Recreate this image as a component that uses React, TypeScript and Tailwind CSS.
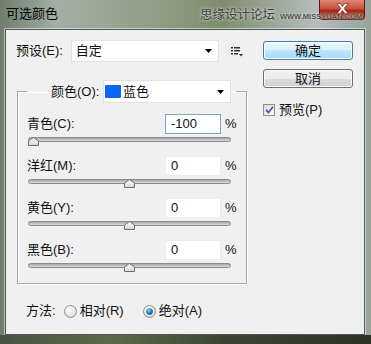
import React from 'react'

const rows = [
  { label: '青色(C):', value: -100, focused: true },
  { label: '洋红(M):', value: 0, focused: false },
  { label: '黄色(Y):', value: 0, focused: false },
  { label: '黑色(B):', value: 0, focused: false },
]

function Arrow() {
  return (
    <svg width="7" height="4" viewBox="0 0 7 4">
      <path d="M0 0H7L3.5 4Z" fill="#000" />
    </svg>
  )
}

function MenuIcon() {
  return (
    <svg width="12" height="10" viewBox="0 0 12 10">
      <rect x="0" y="0" width="2" height="1.5" fill="#333" />
      <rect x="3" y="0" width="6" height="1.5" fill="#333" />
      <rect x="0" y="3" width="2" height="1.5" fill="#333" />
      <rect x="3" y="3" width="6" height="1.5" fill="#333" />
      <rect x="0" y="6" width="2" height="1.5" fill="#333" />
      <rect x="3" y="6" width="4" height="1.5" fill="#333" />
      <path d="M8 7H12L10 9.5Z" fill="#333" />
    </svg>
  )
}

function CloseIcon() {
  return (
    <svg width="13" height="11" viewBox="0 0 13 11">
      <path
        d="M1 0.5H4.2L6.5 3.6L8.8 0.5H12L8.1 5.5L12 10.5H8.8L6.5 7.4L4.2 10.5H1L4.9 5.5Z"
        fill="#fff"
        stroke="#5a1a14"
        strokeWidth="0.6"
      />
    </svg>
  )
}

function Slider({ value }: { value: number }) {
  const left = 5 + ((value + 100) / 200) * 193 - 5.5
  return (
    <div className="relative mt-[3px] ml-[1px] w-[203px] h-[8px]">
      <div className="mt-[2px] h-[5px] rounded-full border border-[#8c8c8c] bg-[linear-gradient(#a4a4a4,#dcdcdc)]" />
      <svg
        className="absolute top-0"
        style={{ left }}
        width="11"
        height="9"
        viewBox="0 0 11 9"
      >
        <defs>
          <linearGradient id="thumb" x1="0" y1="0" x2="0" y2="1">
            <stop offset="0" stopColor="#ffffff" />
            <stop offset="1" stopColor="#d4d4d4" />
          </linearGradient>
        </defs>
        <path d="M0.5 8.5V4L5.5 0.5L10.5 4V8.5Z" fill="url(#thumb)" stroke="#6e6e6e" />
      </svg>
    </div>
  )
}

function Radio({ checked }: { checked: boolean }) {
  return (
    <svg width="13" height="13" viewBox="0 0 13 13">
      <defs>
        <radialGradient id="rOff" cx="0.4" cy="0.35" r="0.7">
          <stop offset="0" stopColor="#ffffff" />
          <stop offset="1" stopColor="#d6d6d6" />
        </radialGradient>
        <radialGradient id="rOn" cx="0.4" cy="0.35" r="0.7">
          <stop offset="0" stopColor="#8fd3f7" />
          <stop offset="0.6" stopColor="#1f7fb8" />
          <stop offset="1" stopColor="#0d4a78" />
        </radialGradient>
      </defs>
      <circle cx="6.5" cy="6.5" r="6" fill="url(#rOff)" stroke="#8f8f8f" />
      {checked && <circle cx="6.5" cy="6.5" r="3.3" fill="url(#rOn)" />}
    </svg>
  )
}

export default function App() {
  return (
    <div className="w-[371px] h-[344px] overflow-hidden flex flex-col font-['Liberation_Sans','Noto_Sans_CJK_SC',sans-serif] text-[13px] text-[#111] bg-[linear-gradient(to_right,#6f7d6c,#a4aea6_15%,#8e9b80_45%,#7f8d6e_60%,#b5bcbb_85%,#9aa39a)]">
      <div className="relative h-[29px] shrink-0 flex items-start">
        <div className="absolute left-[319px] top-0 w-[46px] h-[20px] rounded-b-[4px] border border-t-0 border-[#5a1a14] bg-[linear-gradient(#e08a78,#c9503c_45%,#a52a18_55%,#c4533a)] flex justify-center pt-[3px]">
          <CloseIcon />
        </div>
        <span className="ml-[6px] mt-[6px] leading-[16px] text-black">可选颜色</span>
        <span className="relative z-10 ml-auto mt-[7px] text-[12.5px] leading-[16px] text-[#3e3e3e] [text-shadow:0_0_3px_#fff]">
          思缘设计论坛
        </span>
        <span className="relative z-10 ml-[5px] mr-[9px] mt-[12px] text-[7.5px] leading-[10px] font-bold text-[#4a4a4a] [text-shadow:0_0_2px_#fff]">
          WWW.MISSYUAN.COM
        </span>
      </div>

      <div className="ml-[5px] mr-[6px] h-[306px] shrink-0 flex bg-[#f0f0f0] border border-[#4c5852] shadow-[0_0_0_1px_rgba(255,255,255,0.5)]">
        <div className="w-[237px] flex flex-col">
          <div className="mt-[10px] pl-[10px] flex items-center h-[22px]">
            <span className="w-[55px]">预设(E):</span>
            <div className="w-[149px] h-[22px] bg-white border border-[#e2e2e2] flex items-center pl-[4px] pr-[6px]">
              <span className="flex-1">自定</span>
              <Arrow />
            </div>
            <div className="ml-[12px] mt-[2px]">
              <MenuIcon />
            </div>
          </div>

          <fieldset className="ml-[11px] mt-[18px] w-[226px] border border-[#a9a9a9] pl-[9px] pr-[10px] pb-[12px] shadow-[1px_1px_0_#fff,inset_1px_1px_0_#fff]">
            <legend className="pl-[24px] pr-[5px] flex items-center">
              <span className="w-[52px]">颜色(O):</span>
              <div className="w-[128px] h-[23px] bg-white border border-[#e2e2e2] flex items-center pl-[1px] pr-[6px]">
                <span className="w-[16px] h-[13px] bg-[#0a66f5] rounded-[1px]" />
                <span className="ml-[2px] flex-1">蓝色</span>
                <Arrow />
              </div>
            </legend>

            <div className="mt-[11px] flex flex-col gap-[11px]">
              {rows.map((r) => (
                <div key={r.label}>
                  <div className="flex items-center h-[20px]">
                    <span className="flex-1">{r.label}</span>
                    <div
                      className={
                        r.focused
                          ? 'w-[56px] h-[20px] bg-white border border-[#7fa7c9] flex items-center pl-[5px]'
                          : 'w-[56px] h-[20px] bg-white border border-[#ececec] flex items-center pl-[5px]'
                      }
                    >
                      {r.value}
                    </div>
                    <span className="ml-[4px] w-[11px]">%</span>
                  </div>
                  <Slider value={r.value} />
                </div>
              ))}
            </div>
          </fieldset>

          <div className="mt-[19px] pl-[20px] flex items-center h-[16px]">
            <span>方法:</span>
            <span className="ml-[8px] flex">
              <Radio checked={false} />
            </span>
            <span className="ml-[3px]">相对(R)</span>
            <span className="ml-[19px] flex">
              <Radio checked={true} />
            </span>
            <span className="ml-[3px]">绝对(A)</span>
          </div>
        </div>

        <div className="ml-[20px] w-[90px] pt-[11px] flex flex-col">
          <button className="h-[19px] rounded-[3px] border border-[#3c7fb1] bg-[linear-gradient(#eaf6fd,#d9f0fc_50%,#bee6fd_50%,#a7d9f5)] shadow-[inset_0_0_0_1px_#fff] leading-none">
            确定
          </button>
          <button className="mt-[9px] h-[19px] rounded-[3px] border border-[#707070] bg-[linear-gradient(#f2f2f2,#ebebeb_50%,#dddddd_50%,#cfcfcf)] shadow-[inset_0_0_0_1px_#fcfcfc] leading-none">
            取消
          </button>
          <div className="mt-[15px] flex items-center h-[14px]">
            <div className="w-[12px] h-[12px] border border-[#8e8f8f] bg-[linear-gradient(135deg,#dcdcdc,#fafafa)] flex items-center justify-center">
              <svg width="9" height="8" viewBox="0 0 9 8">
                <path d="M1 4L3.5 6.5L8 0.8" fill="none" stroke="#4a5f97" strokeWidth="1.8" />
              </svg>
            </div>
            <span className="ml-[4px]">预览(P)</span>
          </div>
        </div>
      </div>

      <div className="flex-1 bg-[linear-gradient(to_right,#4a5340,#5c6a4a_30%,#3d4532_60%,#2e3328)]" />
    </div>
  )
}
